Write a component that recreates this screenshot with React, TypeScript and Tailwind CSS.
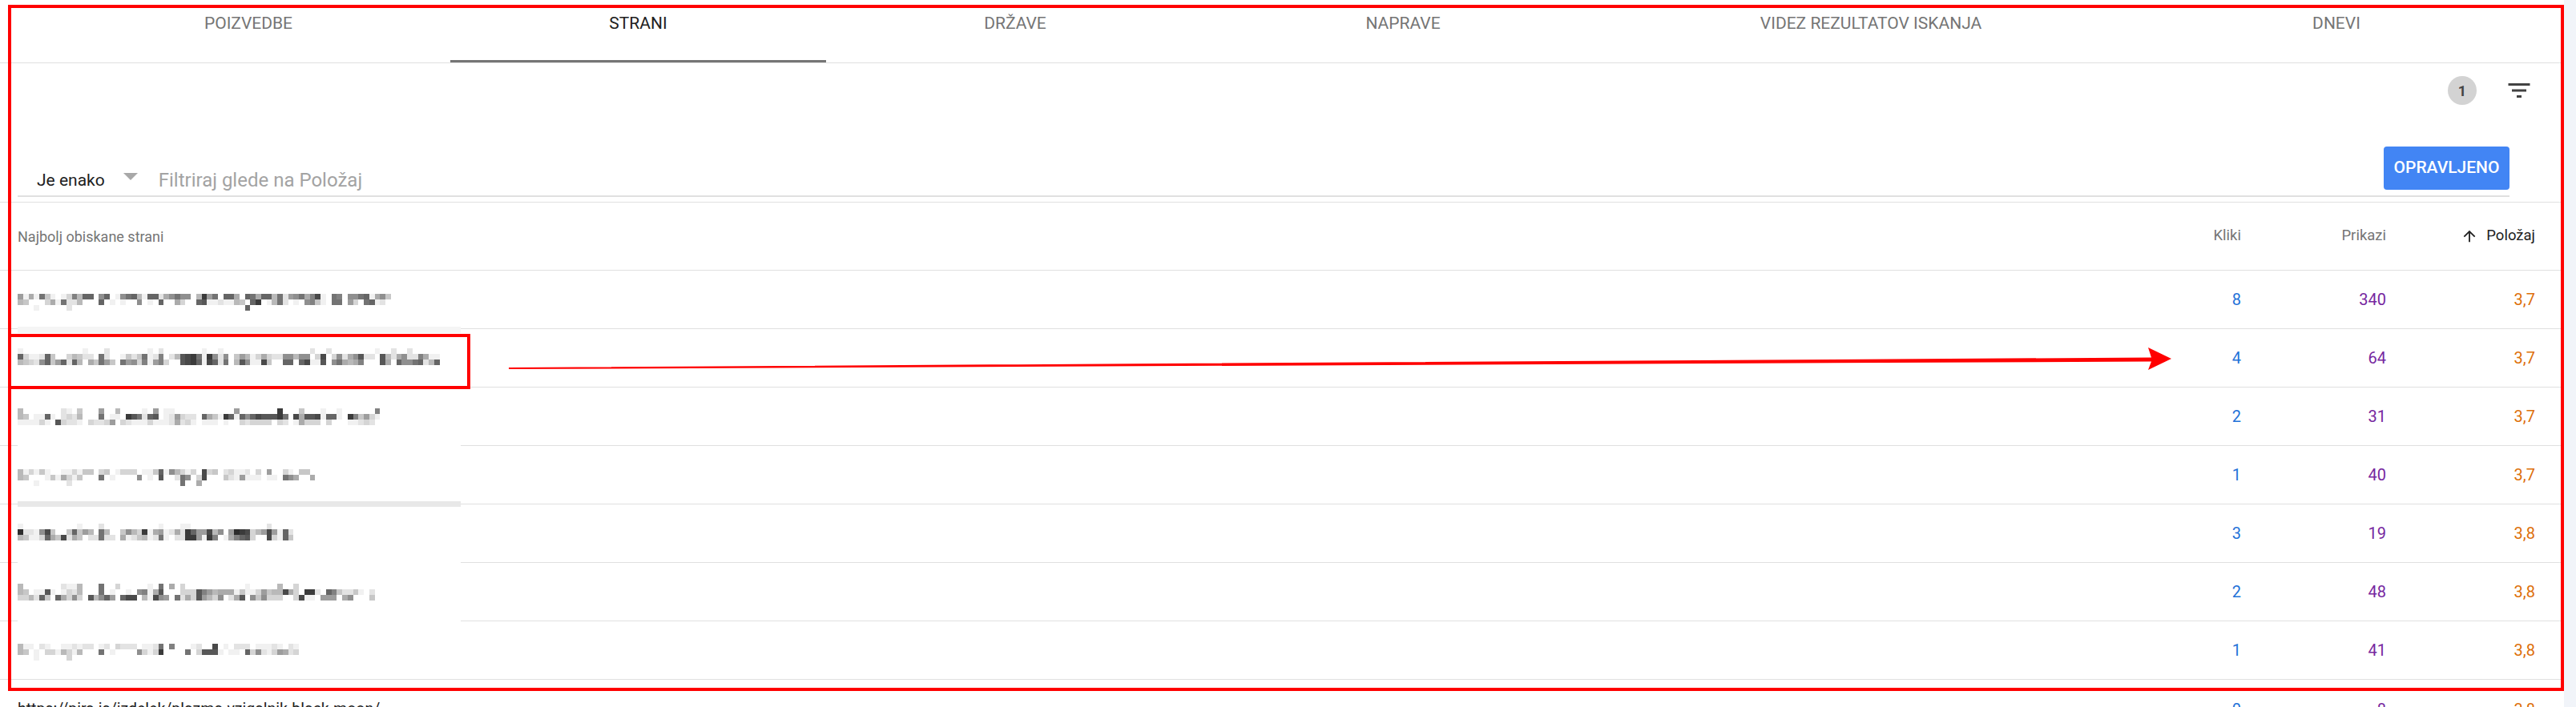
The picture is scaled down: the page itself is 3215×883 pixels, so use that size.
import React from 'react';

// pixelated urls, one hex digit per mosaic cell (0 / . = white, f = darkest)
function Mosaic({ top, bands }: { top: number; bands: string[] }) {
  const rects: React.ReactNode[] = [];
  bands.forEach((band, b) => {
    band.split('').forEach((c, i) => {
      const d = c === '.' ? 0 : parseInt(c, 16);
      if (!d) return;
      const g = 255 - d * 14;
      rects.push(
        <rect key={`${b}-${i}`} x={i * 6.75} y={top + b * 7} width="6.75" height="7" fill={`rgb(${g},${g},${g})`} />
      );
    });
  });
  return (
    <svg width="540" height="72" className="block" shapeRendering="crispEdges">
      {rects}
    </svg>
  );
}

const tabs = [
  { label: 'POIZVEDBE', w: 'w-[504px]' },
  { label: 'STRANI', w: 'w-[469px]', active: true },
  { label: 'DRŽAVE', w: 'w-[472px]' },
  { label: 'NAPRAVE', w: 'w-[496px]' },
  { label: 'VIDEZ REZULTATOV ISKANJA', w: 'w-[672px]' },
  { label: 'DNEVI', w: 'w-[490px]' },
];

const rows = [
  {
    top: 29,
    bands: [
      '7161a41.1395bb.8b.18ab51bb268a88.5e7a.bb6.ba6bb5a278a69d1.a9.88ab1684',
      '54...361a225...b.1.1..8.1.b..63..bc1121154.be.15a2.1.8941.aa.73.ab12',
      '...1.....2................................b',
    ],
    clicks: 8, views: 340, pos: '3,7',
    patch: 'top-[70px] h-[8px] bg-[#f5f5f5]',
  },
  {
    top: 24,
    bands: [
      '1...........1...2.......1.2.......1..1................2..2........1..2..2',
      'b3112b4..354220a2..1424a129.25cdea1e828.47513632288588.3d.38268c22.c5268229611',
      '54328b47b2b5.64a74.a78391793..cdeb1db2a.5c811d4..bb.bd11c.8a6569...c6.b88ab25b',
    ],
    clicks: 4, views: 64, pos: '3,7',
    patch: '',
  },
  {
    top: 26,
    bands: [
      '5.......21.4...7..5....1.7.11...........7.......e...4...1..1......9',
      '54.11b1.2325...a.11.eca2bc.127322.b641eb1b8bdccceaXd6ccd1bb1.e94731'.replace('X', '.'),
      '111131.c3221.32237.32111311126231.111.1..323333.32.16333.3...11232',
    ],
    clicks: 2, views: 31, pos: '3,7',
    patch: 'bottom-[-1px] h-px bg-white',
  },
  {
    top: 29,
    bands: [
      '513141..113144.34.1333.114b185313.d34.23112.3.7..31.44.',
      '54...1416314...a.1....8.1.c..2a8.3d...4217111.11.a86..6',
      '...1.....2....................a..6',
    ],
    clicks: 1, views: 40, pos: '3,7',
    patch: 'top-[69px] h-[7px] bg-[#e8e8e8]',
  },
  {
    top: 24,
    bands: [
      '1..........1...2..........1...11..............2',
      'f2218d4..4b475.a5..4853e1671262eb77d58.7fed357d71b2',
      '54113b64d264.22a22.6124512a1.22ee71e9.169bc3..d31b4',
    ],
    clicks: 3, views: 19, pos: '3,8',
    patch: 'bottom-[-1px] h-px bg-white',
  },
  {
    top: 26,
    bands: [
      '5.......2115...a..3.....1.a.6.3...........1.....5..3',
      '54.11c1.1325...a.1..1.8916c...333c975666141137455d63.ee2.b942241.2',
      '3352b4.b6383.c58b7.bdd.51d87.a263c7538.26c.848333..3d11.777.68...4',
    ],
    clicks: 2, views: 48, pos: '3,8',
    patch: 'bottom-[-1px] h-px bg-white',
  },
  {
    top: 28,
    bands: [
      '511.21..112122.12.3222.112a.9...12..d.1.222.11121.21',
      '54.1.3315315...a.1....8313e....a.3ccc1.11.b382137623',
      '...1.....3',
    ],
    clicks: 1, views: 41, pos: '3,8',
    patch: '',
  },
];

export default function App() {
  return (
    <div className="relative h-[883px] w-[3215px] overflow-hidden bg-[#f1f4f9] font-['Roboto',sans-serif]">
      <div className="h-full w-[3200px] bg-white">
        {/* tabs */}
        <div className="flex h-[79px] border-b border-[#e0e0e0] pl-[58px]">
          {tabs.map((t) => (
            <div
              key={t.label}
              className={`${t.w} flex justify-center pt-[17px] text-[21px] leading-6 uppercase ${
                t.active ? 'border-b-[3px] border-[#757575] text-[#212121]' : 'text-[#757575]'
              }`}
            >
              {t.label}
            </div>
          ))}
        </div>

        {/* filter */}
        <div className="flex h-[174px] flex-col border-b border-[#e0e0e0]">
          <div className="flex items-center justify-end pt-4 pr-[38px]">
            <div className="flex h-9 w-9 items-center justify-center rounded-full bg-[#d3d3d3] text-[18px] font-bold text-[#444444]">1</div>
            <svg className="ml-[35px]" width="36" height="36" viewBox="0 0 24 24" fill="#424242">
              <path d="M10 18h4v-2h-4v2zM3 6v2h18V6H3zm3 7h12v-2H6v2z" />
            </svg>
          </div>
          <div className="mt-[52px] ml-[22px] mr-[68px] flex h-[63px] items-start border-b-2 border-[#e0e0e0]">
            <div className="mt-[30px] ml-6 text-[21px] leading-6 text-[#212121]">Je enako</div>
            <div className="mt-[33px] ml-[23px] h-0 w-0 border-x-[9px] border-t-[9px] border-x-transparent border-t-[#a8a8a8]" />
            <div className="mt-[30px] ml-[26px] text-[24px] leading-6 text-[#a3a3a3]">Filtriraj glede na Položaj</div>
            <button className="ml-auto flex h-[54px] w-[157px] items-center justify-center rounded bg-[#4285f4] text-[21px] font-medium text-white uppercase">
              Opravljeno
            </button>
          </div>
        </div>

        {/* table header */}
        <div className="flex h-[85px] items-center border-b border-[#e0e0e0] pr-9 text-[18.5px] text-[#757575]">
          <div className="ml-[22px] flex-1 text-[18px]">Najbolj obiskane strani</div>
          <div className="w-[100px] text-right">Kliki</div>
          <div className="w-[181px] text-right">Prikazi</div>
          <div className="flex w-[186px] items-center justify-end text-[#212121]">
            <svg className="mr-[10px]" width="22" height="22" viewBox="0 0 24 24" fill="#212121">
              <path d="M4 12l1.41 1.41L11 7.83V20h2V7.83l5.58 5.59L20 12l-8-8-8 8z" />
            </svg>
            Položaj
          </div>
        </div>

        {/* rows */}
        {rows.map((r, i) => (
          <div key={i} className="relative flex h-[73px] items-center border-b border-[#e0e0e0] pr-9 text-[20px]">
            {r.patch && <div className={`absolute left-[22px] w-[553px] ${r.patch}`} />}
            <div className="relative ml-[22px] flex-1">
              <Mosaic top={r.top} bands={r.bands} />
            </div>
            <div className="w-[100px] text-right text-[#1f72d8]">{r.clicks}</div>
            <div className="w-[181px] text-right text-[#7627a0]">{r.views}</div>
            <div className="w-[186px] text-right text-[#dd6f0a]">{r.pos}</div>
          </div>
        ))}

        {/* next row, cut off by the window */}
        <div className="flex h-[73px] items-center pr-9 text-[20px]">
          <div className="ml-[22px] flex-1 text-[19.5px] text-[#212121]">https://pira.is/izdelek/plazma-vzigalnik-black-moon/</div>
          <div className="w-[100px] text-right text-[#1f72d8]">0</div>
          <div className="w-[181px] text-right text-[#7627a0]">8</div>
          <div className="w-[186px] text-right text-[#dd6f0a]">3,8</div>
        </div>
      </div>

      {/* red annotations drawn over the page */}
      <div className="absolute left-[10px] top-[6px] h-[857px] w-[3190px] border-4 border-[#ff0000]" />
      <div className="absolute left-[10px] top-[417px] h-[69px] w-[577px] border-4 border-[#ff0000]" />
      <svg className="absolute left-0 top-0" width="3215" height="883">
        <polygon points="635,459 2685,446.5 2681,434 2710,448 2681,462 2685,451.5 635,461" fill="#ff0000" />
      </svg>
    </div>
  );
}
